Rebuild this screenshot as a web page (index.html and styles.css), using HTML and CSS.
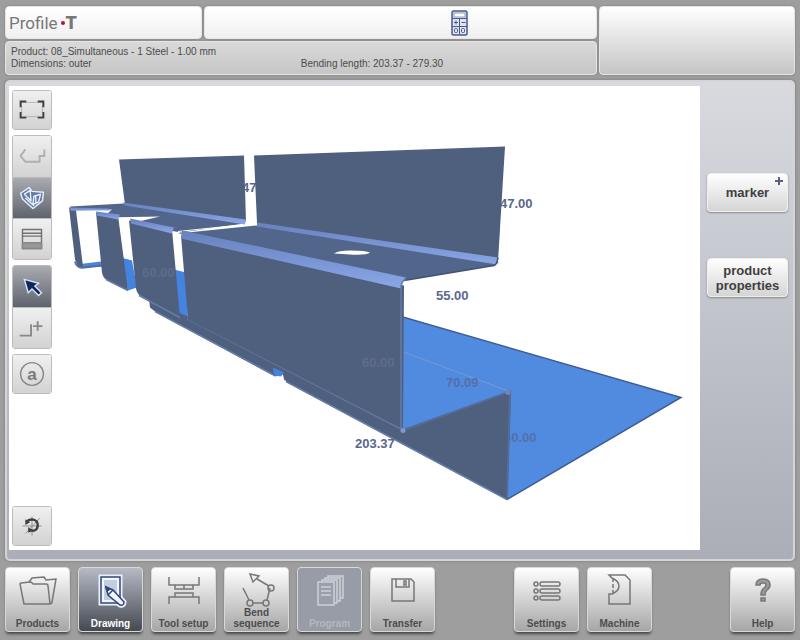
FILE: index.html
```html
<!DOCTYPE html>
<html lang="en">
<head>
<meta charset="utf-8">
<meta name="viewport" content="width=device-width, initial-scale=1">
<title>Profile-T</title>
<link rel="stylesheet" href="styles.css">
</head>
<body>
<div class="app">
  <header class="header">
    <div class="tile brand"><h1 class="logo">Profile<span class="logo-dot"></span><b>T</b></h1></div>
    <div class="tile tools-tile">
      <button class="calc" type="button" aria-label="Calculator">
        <svg width="18" height="26" viewBox="0 0 18 26" fill="none" stroke="#4a598a">
          <rect x="1" y="1" width="15" height="24" rx="1.5" fill="#dfe5f3" stroke-width="1.5"/>
          <rect x="3" y="3" width="11" height="4" fill="#fff" stroke="#8f9bbf"/>
          <path d="M1 8.5h15M1 16.5h15M8.5 8.500v16"/>
          <path d="M3 12.5h4M5 10.5v4M10.5 12.5h4"/>
          <rect x="3.5" y="18.5" width="3" height="4" rx="1"/>
          <rect x="10.5" y="18.5" width="3" height="4" rx="1"/>
        </svg>
      </button>
    </div>
    <div class="tile info">
      <p>Product: 08_Simultaneous - 1 Steel - 1.00 mm</p>
      <p>Dimensions: outer</p>
      <p>Bending length: 203.37 - 279.30</p>
    </div>
    <div class="tile status"></div>
  </header>

  <main class="panel">
    <section class="canvas" aria-label="Drawing">
      <svg class="model" viewBox="9 87 691 463" preserveAspectRatio="xMidYMid meet">
        <defs>
          <linearGradient id="bend" x1="0" y1="0" x2="0" y2="1">
            <stop offset="0" stop-color="#6781bd"/>
            <stop offset="1" stop-color="#8aa7e8"/>
          </linearGradient>
        </defs>
        <g class="dim">
          <text x="242" y="192">47</text>
          <text x="500" y="208">47.00</text>
          <text x="436" y="300">55.00</text>
        </g>
        <!-- base sheet -->
        <path d="M401 317 681 398 507 500 400 432z" fill="#508be0"/>
        <path d="M401 317 681 398 507 500" fill="none" stroke="#405c96" stroke-width="1.5"/>
        <path d="M402 352 510 392" stroke="#7899d4"/>
        <path d="M76 265 101 262 104 267 80 268z" fill="#4d83d8"/>
        <path d="M121 258 132 261 137 288 128 291z" fill="#4583e0"/>
        <path d="M174 270 186 273 188 320 178 317z" fill="#4583e0"/>
        <text x="504" y="442" class="dim mid">60.00</text>
        <!-- lower flange -->
        <path d="M149 300 190 318 404 431 511 392 507 500 289 384 284 380 283 375 275 377 155 312 150 308z" fill="#4f607f"/>
        <path d="M273 368 284 373 281 377 274 376z" fill="#4583e0"/>
        <path d="M187 319 404 431M155 312 273 375M286 382 507 500" fill="none" stroke="#647aa8" stroke-width="1.5"/>
        <path d="M402 431 510 392V396L507 500" fill="none" stroke="#566b96" stroke-width="2"/>
        <circle cx="508" cy="393" r="2.5" fill="#7186b1"/>
        <!-- rear upright plates -->
        <path d="M119 160 244 156 246 222 125 205z" fill="#4f607f"/>
        <path d="M254 156 505 147 498 262 257 224z" fill="#4f607f"/>
        <!-- shelf -->
        <path d="M70 207 124 204 245 224 181 233 130 224 160 217 103 218 112 210 72 211z" fill="#52668b"/>
        <path d="M178 234 256 226 499 263 494 266 404 281z" fill="#52668b"/>
        <path d="M178 232 245 225" stroke="#fff"/>
        <path d="M123 203 246 220 245 225 125 206z" fill="url(#bend)"/>
        <path d="M257 223 498 258 497 265 257 227z" fill="url(#bend)"/>
        <path d="M404 281 494 266Q497 265 498 258" fill="none" stroke="#405174" stroke-width="1.5"/>
        <path d="M334 254Q338 251 350 251 366 251 370 253 366 256 350 255z" fill="#fff"/>
        <!-- front plates -->
        <path d="M69 208 76 211 83 267 79 268 75 260z" fill="#4f607f"/>
        <path d="M75 262Q77 269 84 268L102 266" fill="none" stroke="#526c9d" stroke-width="2"/>
        <path d="M96 213 118 216 128 291 106 280Q103 278 102 273z" fill="#4f607f"/>
        <path d="M129 221 172 230 180 318 142 297Q137 295 136 289z" fill="#4f607f"/>
        <path d="M181 236 404 286 403 430 188 320z" fill="#4f607f"/>
        <path d="M69 208 108 209 111 211 71 211z" fill="url(#bend)"/>
        <path d="M96 212 120 215 118 220 97 216z" fill="url(#bend)"/>
        <path d="M130 219 174 228 172 234 131 224z" fill="url(#bend)"/>
        <path d="M182 231 406 278Q402 281 401 289L181 239z" fill="url(#bend)"/>
        <path d="M106 280 128 291M139 296 180 318M406 280Q401 281 401 289V430" fill="none" stroke="#647aa8" stroke-width="1.5"/>
        <circle cx="403" cy="431" r="2.5" fill="#8198c8"/>
        <g class="dim">
          <text x="142" y="277" class="faint">60.00</text>
          <text x="362" y="367" class="faint">60.00</text>
          <text x="446" y="387" class="mid">70.09</text>
          <text x="355" y="448">203.37</text>
        </g>
      </svg>
      <nav class="toolbar" aria-label="Drawing tools">
        <div class="group">
          <button type="button" aria-label="Fit to window"><svg viewBox="0 0 40 40" fill="none" stroke="#404040" stroke-width="2"><path d="M9 12h22v15H9z" stroke="#b5b5b5" stroke-width="1"/><path d="M8 17v-6h6M26 11h6v6M32 22v6h-6M14 28H8v-6"/></svg></button>
        </div>
        <div class="group stack">
          <button type="button" aria-label="Profile view"><svg viewBox="0 0 40 40" fill="none" stroke="#b0b0b0" stroke-width="2"><path d="m13 12-5 7 5 6h15v-6h5v-7"/></svg></button>
          <button type="button" class="active" aria-label="3D view"><svg viewBox="0 0 40 40" fill="none" stroke="#e7efff" stroke-width="1.500" stroke-linejoin="round"><path d="m8 15 9-6 3 4 12 1-1 9-10 8-11-10z" fill="#6479a0"/><path d="m12 16 6-4 1 11-7-7zM22 18l7-2-2 8-6 3zM13 20l9 8M24 18v7"/></svg></button>
          <button type="button" aria-label="Layers"><svg viewBox="0 0 40 40" fill="none" stroke="#737373" stroke-width="1.5"><path d="M10 10h20v20H10zM10 14h20M10 17h20"/><path d="M10 24h20v6H10z" fill="#999" stroke="#888"/></svg></button>
        </div>
        <div class="group stack">
          <button type="button" class="active" aria-label="Select"><svg viewBox="0 0 40 40"><path d="m12 12 15 4-4 3 7 7-3 3-7-7-4 4z" fill="#11285e" stroke="#d6e3fa" stroke-width="1.5"/></svg></button>
          <button type="button" aria-label="Add segment"><svg viewBox="0 0 40 40" fill="none" stroke="#898989" stroke-width="2"><path d="M7 28h12V16M21 18h10M26 13v10"/></svg></button>
        </div>
        <div class="group">
          <button type="button" aria-label="Annotate"><svg viewBox="0 0 40 40"><circle cx="20" cy="20" r="12" fill="none" stroke="#858585" stroke-width="1.5"/><text x="20" y="26" class="glyph">a</text></svg></button>
        </div>
        <div class="group last">
          <button type="button" aria-label="Rotate"><svg viewBox="0 0 40 40" fill="none" stroke="#8c8c8c"><path d="M10 20h20M20 10v20M13 28 28 12"/><path d="M14 16c4-5 12-3 12 3s-5 7-8 5" stroke="#3f3f3f" stroke-width="2.5"/><path d="m13 13v6l5-3zM16 21v6l5-2z" fill="#3f3f3f" stroke="none"/></svg></button>
        </div>
      </nav>
    </section>
    <aside class="side">
      <button type="button" class="action">marker<span class="plus" aria-hidden="true"></span></button>
      <button type="button" class="action">product properties</button>
    </aside>
  </main>

  <footer class="footer">
    <button type="button" class="tab"><svg viewBox="0 0 48 40"><path d="M10 34 6 14q0-1 1-1l9-1q2 0 3 2h13q2 0 2 2l2 18zM15 12l3-4 12-1 2 3 10-1-4 23q0 2-3 2"/></svg><span>Products</span></button>
    <button type="button" class="tab selected"><svg viewBox="0 0 48 40"><path d="M14 7h19v26H14z" class="glow"/><path d="m19 17 2 8 12 10q4 1 4-3L26 20z" class="glow"/><path d="M14 7h19v26H14z" fill="#f3f7ff"/><path d="M17 10h13v20H17z" fill="#c3cde2" stroke="none"/><path d="m19 17 2 8 12 10q4 1 4-3L26 20zM21 25l5-5" fill="#f3f7ff"/><path d="m19 17 1 4 3-2z" fill="#253b71"/></svg><span>Drawing</span></button>
    <button type="button" class="tab"><svg viewBox="0 0 48 40"><path d="M9 7v8h30V7M15 15v4h18v-4M24 15v4M15 23h18v4H15zM9 34v-7h30v7"/></svg><span>Tool setup</span></button>
    <button type="button" class="tab"><svg viewBox="0 0 48 40"><path d="m17 4 9 2-6 6zM24 9l12 7M37 18l-3 12M20 33h10M10 18l6 12"/><g><circle cx="38" cy="18" r="3"/><circle cx="17" cy="33" r="3"/><circle cx="33" cy="33" r="3"/></g></svg><span>Bend sequence</span></button>
    <button type="button" class="tab" disabled><svg viewBox="0 0 48 40"><g fill="#9aa0ab"><path d="M22 6h15v22H22z"/><path d="M19 8h15v23H19z"/><path d="M16 10h15v23H16z"/><path d="M12 12h16v23H12zM15 17h10M15 21h10M15 25h10"/></g></svg><span>Program</span></button>
    <button type="button" class="tab"><svg viewBox="0 0 48 40"><path d="M13 9h19l3 3v19H13zM17 9v8h13V9M25 11h2v4h-2z"/></svg><span>Transfer</span></button>
    <button type="button" class="tab settings"><svg viewBox="0 0 48 40"><circle cx="13" cy="14" r="2"/><circle cx="13" cy="21" r="2"/><circle cx="13" cy="28" r="2"/><rect x="17" y="12" width="20" height="4" rx="2"/><rect x="17" y="19" width="20" height="4" rx="2"/><rect x="17" y="26" width="20" height="4" rx="2"/></svg><span>Settings</span></button>
    <button type="button" class="tab"><svg viewBox="0 0 48 40"><path d="M13 5h16l5 5v24H13V24h3q7-3 7-8t-7-8zM17 8v4M17 14v4M17 20v3"/></svg><span>Machine</span></button>
    <button type="button" class="tab help"><svg viewBox="0 0 48 40"><path d="M17 15q0-6 7-6t7 6q0 3-3 5-2 2-2 5h-4q0-5 3-7 2-1 2-3t-3-2-3 2zM22 28h4v3h-4z" fill="#9a9a9a"/></svg><span>Help</span></button>
  </footer>
</div>
</body>
</html>
```

FILE: styles.css
```css
* { box-sizing: border-box; }

body {
  margin: 0;
  background: #9e9e9e;
  color: #4b4b4b;
  font-family: "Liberation Sans", Arial, sans-serif;
}

button {
  margin: 0;
  padding: 0;
  border: 0;
  background: none;
  color: inherit;
  font: inherit;
}

.app {
  display: flex;
  flex-direction: column;
  min-height: 100vh;
  padding: 6px 5px 8px;
}

/* Header */
.header {
  display: grid;
  grid-template-columns: 197fr 394fr 197fr;
  grid-template-rows: 33px 34px;
  gap: 2px;
}

.tile {
  border: 1px solid #e6e6e6;
  border-radius: 4px;
  background: linear-gradient(#ffffff, #f0f0f0);
  box-shadow: 0 0 2px #777;
}

.brand { display: flex; align-items: center; padding: 0 3px; }

.logo {
  display: flex;
  align-items: center;
  margin: 0;
  color: #777;
  font: 400 17px/20px Roboto, sans-serif;
}

.logo b { font-size: 18px; font-weight: 900; }

.logo-dot {
  width: 4px;
  height: 4px;
  margin: 0 1px 0 3px;
  border-radius: 2px;
  background: #b3123d;
}

.tools-tile { display: grid; place-items: center; }
.calc svg { display: block; }
.calc { margin-left: 120px; }

.info {
  display: grid;
  grid-column: 1 / 3;
  grid-template-columns: 1fr 1fr;
  align-content: center;
  padding: 0 5px;
  background: linear-gradient(#d9d9d9, #c6c6c6);
  font-size: 10px;
  line-height: 12px;
}

.info p { margin: 0; }
.info p:first-child { grid-column: 1 / 3; }

.status {
  grid-row: 1 / 3;
  grid-column: 3;
  background: linear-gradient(#ffffff, #c5c5c5);
}

/* Work area */
.panel {
  display: flex;
  flex: 1;
  margin-top: 5px;
  padding: 4px 0 9px 2px;
  border: 2px solid #d5d5d8;
  border-radius: 5px;
  background: linear-gradient(#d8dae0, #abadb7);
  box-shadow: 0 0 3px #777;
}

.canvas {
  position: relative;
  display: flex;
  flex: 1;
  padding: 4px 3px;
  background: #fff;
}

.model {
  position: absolute;
  inset: 0;
  width: 100%;
  height: 100%;
}

.dim {
  fill: #5a678c;
  font-size: 13px;
  font-weight: bold;
}

.faint { fill: #5e6c88; }
.mid { fill: #5570a8; }

.toolbar {
  position: relative;
  display: flex;
  flex-direction: column;
  gap: 5px;
}

.group {
  display: flex;
  flex-direction: column;
  overflow: hidden;
  border: 1px solid #bcbcbc;
  border-radius: 3px;
}

.group.last { margin-top: auto; }

.group button {
  width: 38px;
  height: 38px;
  background: linear-gradient(#f0f0f0, #d2d2d2);
}

.stack button { height: 41px; }
.stack button + button { border-top: 1px solid #bcbcbc; }

.group .active { background: linear-gradient(#a9abb1, #5f636d); }
.group svg { display: block; width: 38px; height: 38px; }

.glyph {
  fill: #7a7a7a;
  font-size: 18px;
  font-weight: bold;
  text-anchor: middle;
}

.side {
  display: flex;
  flex-direction: column;
  gap: 46px;
  width: 93px;
  padding: 87px 5px 0 7px;
}

.action {
  position: relative;
  height: 39px;
  border: 1px solid #efefef;
  border-radius: 4px;
  background: linear-gradient(#fff, #d5d5d5);
  box-shadow: 0 1px 2px #888;
  color: #3f3f3f;
  font-size: 13px;
  font-weight: bold;
  line-height: 15px;
}

.plus {
  position: absolute;
  top: 3px;
  right: 4px;
  width: 8px;
  height: 8px;
  background:
    linear-gradient(#5b5f7b, #5b5f7b) center / 8px 2px no-repeat,
    linear-gradient(#5b5f7b, #5b5f7b) center / 2px 8px no-repeat;
}

/* Bottom navigation */
.footer {
  display: flex;
  gap: 8px;
  padding-top: 6px;
}

.tab {
  display: flex;
  flex-direction: column;
  align-items: center;
  width: 65px;
  height: 65px;
  padding: 2px 0;
  border: 1px solid #d8d8d8;
  border-radius: 4px;
  background: linear-gradient(#fff, #a6a6a6);
  box-shadow: 0 3px 3px -1px #444;
  color: #4c4c4c;
  font-size: 10px;
  font-weight: bold;
  line-height: 11px;
}

.tab svg {
  flex: none;
  width: 48px;
  height: 40px;
  margin-bottom: -8px;
  fill: none;
  stroke: #777;
  stroke-width: 1.5;
}

.tab span { margin-top: auto; }

.tab.selected {
  background: linear-gradient(#b5bac5, #454951);
  color: #fff;
}

.selected svg { stroke: #31477c; }
.selected .glow { fill: #e9f1ff; stroke: #e9f1ff; stroke-width: 5; }

.tab:disabled {
  background: #979ca7;
  color: #b4b8c1;
}

.tab:disabled svg { stroke: #cdd0d6; }

.settings { margin-left: auto; }
.help { margin-left: 70px; }
```
